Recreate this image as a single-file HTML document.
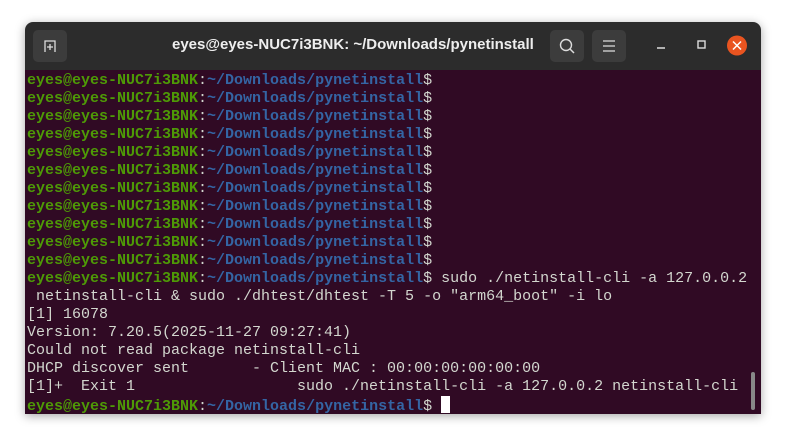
<!DOCTYPE html>
<html><head><style>
body{margin:0;width:786px;height:443px;background:#fff;position:relative;overflow:hidden;font-family:"Liberation Sans",sans-serif}
.win{position:absolute;left:25px;top:22px;width:736px;height:392px;border-radius:8px 8px 0 0;overflow:hidden;box-shadow:0 2px 10px rgba(0,0,0,.35)}
.tb{position:absolute;left:0;top:0;width:736px;height:48px;background:#2c2c2c}
.btn{position:absolute;top:8px;width:34px;height:32px;background:#3c3c3c;border-radius:5px}
.title{position:absolute;left:147px;top:14px;white-space:nowrap;color:#eee;font-weight:bold;font-size:15px;letter-spacing:0}
.body{position:absolute;left:0;top:48px;width:736px;height:344px;background:#300a24}
pre{margin:0;position:absolute;left:2px;top:2px;font-family:"Liberation Mono",monospace;font-size:15px;line-height:18px;color:#d3d7cf;letter-spacing:0}
.g{color:#4e9a06;font-weight:bold}.b{color:#3465a4;font-weight:bold}
.cur{display:inline-block;width:9px;height:17px;background:#fff;vertical-align:-3px}
</style></head><body>
<div class="win">
<div class="tb">
<div class="btn" style="left:8px"><svg width="34" height="32"><path d="M12 22V11h10v11" stroke="#ddd" stroke-width="1.3" fill="none"/><path d="M17 14v6M14 17h6" stroke="#ddd" stroke-width="1.3"/></svg></div>
<div class="title">eyes@eyes-NUC7i3BNK: ~/Downloads/pynetinstall</div>
<div class="btn" style="left:525px"><svg width="34" height="32"><circle cx="16" cy="15" r="5.5" stroke="#ddd" stroke-width="1.4" fill="none"/><path d="M20 19l4 4" stroke="#ddd" stroke-width="1.5"/></svg></div>
<div class="btn" style="left:567px"><svg width="34" height="32"><path d="M11 11h12M11 16h12M11 21h12" stroke="#ddd" stroke-width="1.3"/></svg></div>
<svg style="position:absolute;left:620px;top:8px" width="116" height="32"><path d="M12 18h8" stroke="#ddd" stroke-width="1.4"/><rect x="53" y="11" width="7" height="7" stroke="#ddd" stroke-width="1.4" fill="none"/><circle cx="92" cy="15.5" r="10" fill="#e95420"/><path d="M88 11.5l8 8M96 11.5l-8 8" stroke="#fff" stroke-width="1.5"/></svg>
</div>
<div class="body">
<pre><span class="g">eyes@eyes-NUC7i3BNK</span>:<span class="b">~/Downloads/pynetinstall</span>$
<span class="g">eyes@eyes-NUC7i3BNK</span>:<span class="b">~/Downloads/pynetinstall</span>$
<span class="g">eyes@eyes-NUC7i3BNK</span>:<span class="b">~/Downloads/pynetinstall</span>$
<span class="g">eyes@eyes-NUC7i3BNK</span>:<span class="b">~/Downloads/pynetinstall</span>$
<span class="g">eyes@eyes-NUC7i3BNK</span>:<span class="b">~/Downloads/pynetinstall</span>$
<span class="g">eyes@eyes-NUC7i3BNK</span>:<span class="b">~/Downloads/pynetinstall</span>$
<span class="g">eyes@eyes-NUC7i3BNK</span>:<span class="b">~/Downloads/pynetinstall</span>$
<span class="g">eyes@eyes-NUC7i3BNK</span>:<span class="b">~/Downloads/pynetinstall</span>$
<span class="g">eyes@eyes-NUC7i3BNK</span>:<span class="b">~/Downloads/pynetinstall</span>$
<span class="g">eyes@eyes-NUC7i3BNK</span>:<span class="b">~/Downloads/pynetinstall</span>$
<span class="g">eyes@eyes-NUC7i3BNK</span>:<span class="b">~/Downloads/pynetinstall</span>$
<span class="g">eyes@eyes-NUC7i3BNK</span>:<span class="b">~/Downloads/pynetinstall</span>$ sudo ./netinstall-cli -a 127.0.0.2
 netinstall-cli &amp; sudo ./dhtest/dhtest -T 5 -o "arm64_boot" -i lo
[1] 16078
Version: 7.20.5(2025-11-27 09:27:41)
Could not read package netinstall-cli
DHCP discover sent       - Client MAC : 00:00:00:00:00:00
[1]+  Exit 1                  sudo ./netinstall-cli -a 127.0.0.2 netinstall-cli
<span class="g">eyes@eyes-NUC7i3BNK</span>:<span class="b">~/Downloads/pynetinstall</span>$ <span class="cur"></span></pre>
<div style="position:absolute;left:726px;top:302px;width:4px;height:38px;background:#888;border-radius:2px"></div>
</div>
</div>
</body></html>
